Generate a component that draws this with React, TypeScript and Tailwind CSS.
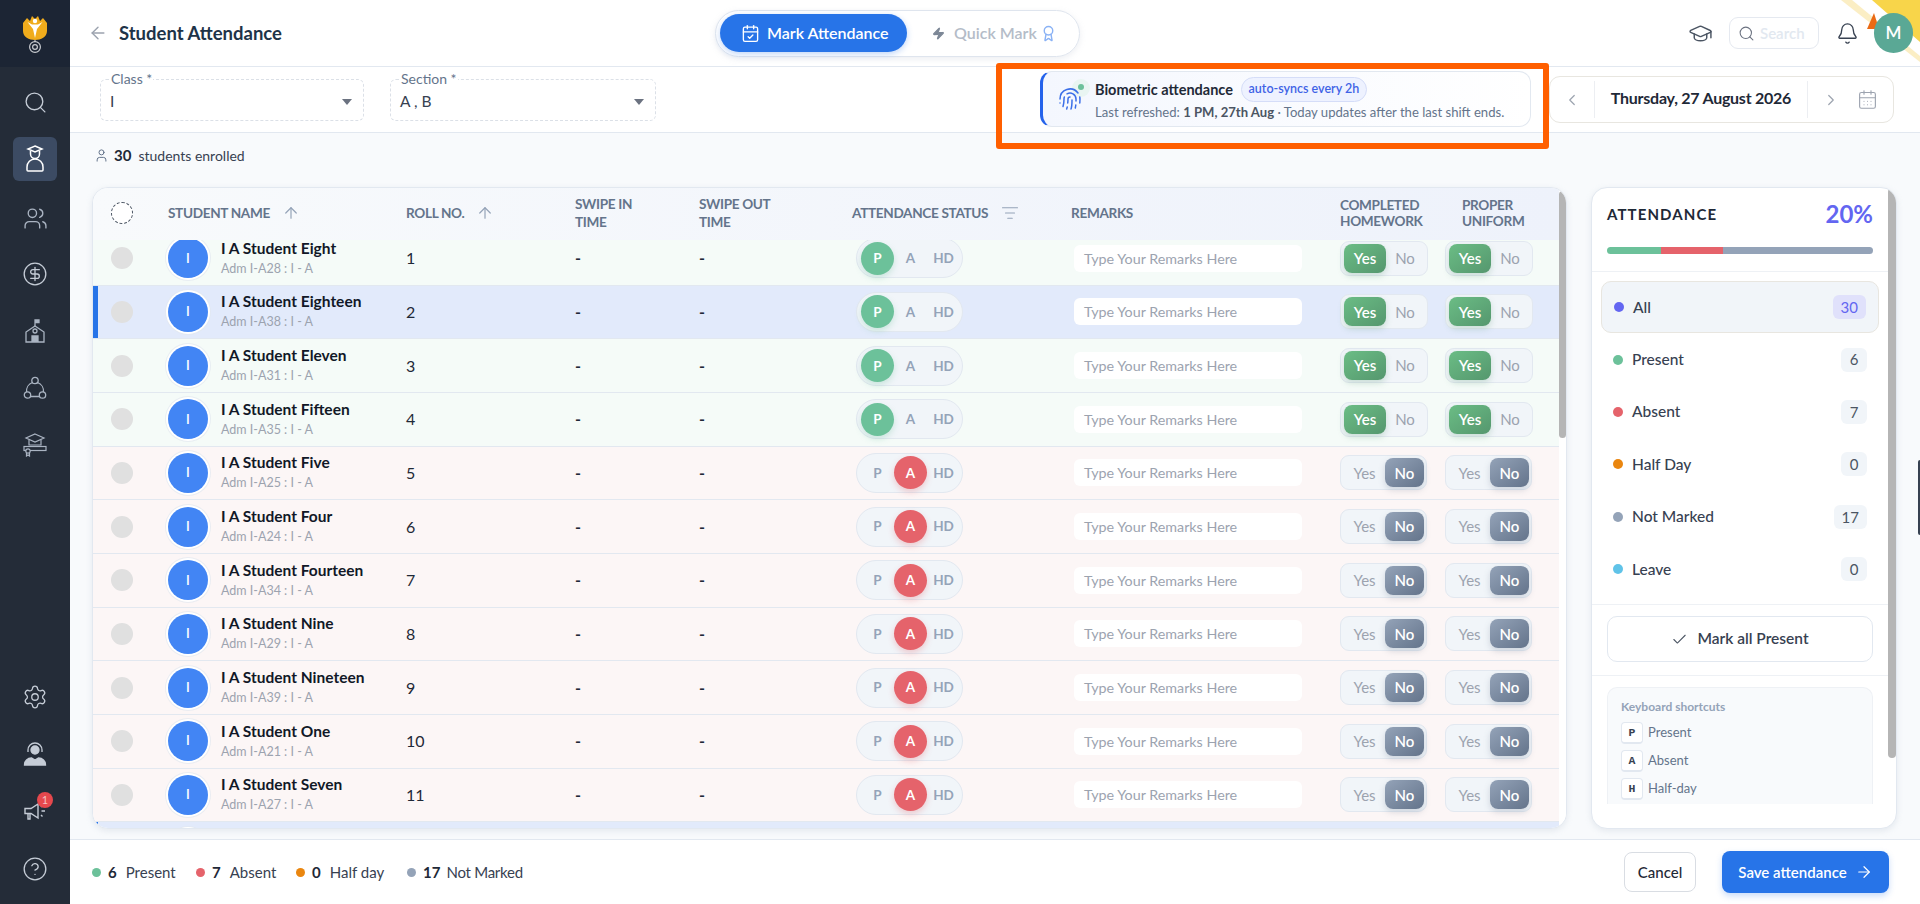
import React from "react";
import {
  ArrowLeft, ArrowRight, ArrowUp, Award, Bell, CalendarCheck, CalendarDays, Check, ChevronLeft, ChevronRight,
  CircleDollarSign, CircleHelp, Fingerprint, GraduationCap, ListFilter, Search, Settings, User, Users, Zap,
} from "lucide-react";

const FONT = "font-['Lato','Noto_Sans',sans-serif]";

function Logo() {
  return (
    <svg width="24" height="38" viewBox="0 0 24 38" fill="none">
      <path d="M0 8L4 3l3 3 2-5 3 3 3-3 2 5 3-3 4 5v8c0 6-6 9-12 9S0 22 0 16z" fill="#f0ac1c" />
      <path d="M4.500 7L9 9.500h6L19.500 7 14 14l-2 9-2-9z" fill="#fff" />
      <circle cx="12" cy="6" r="2.200" fill="#fff" />
      <path d="M12 25v2" stroke="#c9ccd1" strokeWidth="1.200" />
      <circle cx="12" cy="32" r="5.400" stroke="#c9ccd1" strokeWidth="1.200" />
      <circle cx="12" cy="32" r="2.400" stroke="#c9ccd1" strokeWidth="1.200" />
    </svg>
  );
}

function StudentIcon() {
  return (
    <svg width="22" height="28" viewBox="0 0 22 28" fill="none" stroke="#fff" strokeWidth="1.5">
      <path d="M11 1l7 3-7 3-7-3z" />
      <path d="M6.500 6v3a4.500 4.500 0 0 0 9 0V6" />
      <path d="M3 25v-3a8 8 0 0 1 16 0v3a1 1 0 0 1-1 1H4a1 1 0 0 1-1-1z" />
    </svg>
  );
}

function SchoolIcon() {
  return (
    <svg width="22" height="24" viewBox="0 0 22 24" fill="none" stroke="#aab4c2" strokeWidth="1.300">
      <path d="M11 8V1h4v2.500h-4" fill="#aab4c2" />
      <path d="M2 23V13l9-6 9 6v10z" />
      <circle cx="11" cy="12" r="2" />
      <path d="M8 23v-6h6v6" fill="#aab4c2" />
    </svg>
  );
}

function NetworkIcon() {
  return (
    <svg width="24" height="24" viewBox="0 0 24 24" fill="none" stroke="#aab4c2" strokeWidth="1.300">
      <circle cx="12" cy="4.500" r="3.200" />
      <circle cx="4.500" cy="19" r="3.200" />
      <circle cx="19.500" cy="19" r="3.200" />
      <path d="M9.500 6.500A9 9 0 0 0 3.600 16M14.500 6.500a9 9 0 0 1 5.900 9.500M7.500 20.500h9" />
    </svg>
  );
}

function GradIcon() {
  return (
    <svg width="24" height="24" viewBox="0 0 24 24" fill="none" stroke="#aab4c2" strokeWidth="1.200">
      <path d="M12 1l9 4-9 4-9-4z" />
      <path d="M6 7v5h12V7" />
      <rect x="1" y="13.500" width="22" height="4" />
      <circle cx="5" cy="18" r="2.200" fill="#242c38" />
      <path d="M3.500 20v3l1.500-1 1.500 1v-3" />
    </svg>
  );
}

function SupportIcon() {
  return (
    <svg width="24" height="24" viewBox="0 0 24 24" fill="none" stroke="#c5ccd6" strokeWidth="1.300">
      <circle cx="12" cy="8" r="4" fill="#c5ccd6" />
      <path d="M5 10V8a7 7 0 0 1 14 0v2" />
      <path d="M1.500 23c0-4 3-7 7-7l3.500 2 3.500-2c4 0 7 3 7 7z" fill="#c5ccd6" />
    </svg>
  );
}

function MegaphoneIcon() {
  return (
    <svg width="24" height="24" viewBox="0 0 24 24" fill="none" stroke="#c5ccd6" strokeWidth="1.400">
      <path d="M2 9.500h6L15 5v14l-7-4.500H2z" />
      <path d="M5 14.500V20h2v-5.500M18 8l1-1.500M18.500 12H22M18 16l1.500 1.500" />
    </svg>
  );
}

function Sidebar() {
  return (
    <aside className="w-[70px] h-full shrink-0 bg-[#242c38] flex flex-col items-center">
      <div className="w-full h-[67px] bg-[#1c2534] flex items-center justify-center shrink-0">
        <Logo />
      </div>
      <div className="mt-[23px] h-6 flex items-center justify-center"><Search size={25} strokeWidth={1.3} color="#c5ccd6" /></div>
      <div className="mt-[23px] w-11 h-11 rounded-md bg-[#3c4b63] flex items-center justify-center"><StudentIcon /></div>
      <div className="mt-[25px] h-6 flex items-center"><Users size={25} strokeWidth={1.3} color="#aab4c2" /></div>
      <div className="mt-[32px] h-6 flex items-center"><CircleDollarSign size={26} strokeWidth={1.2} color="#c5ccd6" /></div>
      <div className="mt-[33px] h-6 flex items-center"><SchoolIcon /></div>
      <div className="mt-[33px] h-6 flex items-center"><NetworkIcon /></div>
      <div className="mt-[33px] h-6 flex items-center"><GradIcon /></div>
      <div className="mt-[228px] h-6 flex items-center"><Settings size={26} strokeWidth={1.2} color="#c5ccd6" /></div>
      <div className="mt-[33px] h-6 flex items-center"><SupportIcon /></div>
      <div className="mt-[33px] h-6 flex items-center relative">
        <MegaphoneIcon />
        <span className={`absolute -top-[7px] left-[14px] w-4 h-4 rounded-full bg-[#e5484d] text-[11px] leading-4 text-center text-[#f5c2c4] ${FONT}`}>1</span>
      </div>
      <div className="mt-[34px] h-6 flex items-center"><CircleHelp size={26} strokeWidth={1.2} color="#c5ccd6" /></div>
    </aside>
  );
}

function Header() {
  return (
    <header className="relative h-[67px] shrink-0 bg-white border-b border-[#e2e8f0] flex items-center overflow-hidden">
      <div className="w-[645px] shrink-0 pl-[18px] flex items-center gap-[11px]">
        <ArrowLeft size={20} strokeWidth={1.7} color="#9ca3af" />
        <span className="text-[18.5px] font-bold text-[#1e3348] leading-none">Student Attendance</span>
      </div>
      <div className="w-[365px] h-[47px] rounded-full border border-[#dfe5ee] shadow-[0_2px_6px_rgba(148,163,184,0.18)] flex items-center p-1">
        <div className="w-[187px] h-[38px] rounded-full bg-[#2774e8] shadow-[0_2px_6px_rgba(39,116,232,0.3)] flex items-center pl-[21px] gap-[7px] text-white">
          <CalendarCheck size={19} strokeWidth={1.7} />
          <span className="text-[16px] font-semibold">Mark Attendance</span>
        </div>
        <div className="flex items-center pl-[25px] text-[#b4bcc8]">
          <Zap size={13} fill="#7c8796" color="#7c8796" />
          <span className="text-[16px] font-semibold ml-[9px]">Quick Mark</span>
          <Award size={17} color="#8ab2f5" strokeWidth={2} className="ml-[3px]" />
        </div>
      </div>
      <div className="flex-1 flex items-center">
        <GraduationCap size={25} strokeWidth={1.4} color="#4b5563" className="ml-[608px]" />
        <div className="ml-[16px] w-[90px] h-[32px] rounded-[9px] border border-[#e5e9f0] flex items-center pl-[8px] gap-[5px]">
          <Search size={17} strokeWidth={1.5} color="#6b7280" />
          <span className="text-[15px] font-semibold text-[#e2e8f0]">Search</span>
        </div>
        <Bell size={23} strokeWidth={1.4} color="#374151" className="ml-[17px]" />
      </div>
      <svg className="absolute right-0 top-0" width="80" height="66" viewBox="0 0 80 66">
        <path d="M1 0h11l68 56v6z" fill="#fbeec4" />
        <path d="M32 0h48v42z" fill="#f8d54a" />
        <path d="M27 29l7-16 5 16z" fill="#ea6a14" />
      </svg>
      <div className="absolute right-[7px] top-[13px] w-[39px] h-[40px] rounded-full bg-[#5aa895] text-white text-[17px] font-semibold flex items-center justify-center">M</div>
    </header>
  );
}

function Field({ label, value, className }: { label: string; value: string; className: string }) {
  return (
    <div className={`relative h-[42px] rounded-md border border-dashed border-[#dbe0e7] flex items-center pl-[9px] pr-[11px] justify-between ${className}`}>
      <span className="absolute -top-[10px] left-[9px] bg-white px-[1px] text-[14px] text-[#64748b] leading-[18px]">{label}</span>
      <span className="text-[15.5px] text-[#374151] mt-[3px]">{value}</span>
      <span className="w-0 h-0 border-x-[5px] border-x-transparent border-t-[6px] border-t-[#6b7280] mt-[3px]" />
    </div>
  );
}

function FilterBar() {
  return (
    <div className="h-[66px] shrink-0 bg-white border-b border-[#e2e8f0] flex items-start pl-[30px] pr-[26px]">
      <Field label="Class *" value="I" className="w-[264px] mt-[12px]" />
      <Field label="Section *" value="A , B" className="w-[266px] ml-[26px] mt-[12px]" />
      <div className="ml-[384px] mt-[4px] w-[491px] h-[56px] rounded-xl border border-[#e2e8f0] border-l-[3px] border-l-[#2563eb] bg-gradient-to-r from-[#f4f7fe] to-white flex items-center pl-[15px] gap-[13px]">
        <div className="relative w-[23px] h-[24px] shrink-0">
          <span className="absolute -top-[8px] left-[14px] w-[18px] h-[18px] rounded-full bg-[#e9f5f2]" />
          <Fingerprint size={24} strokeWidth={1.5} color="#3b6fe8" className="relative" />
          <span className="absolute -top-[3px] left-[20px] w-[6px] h-[6px] rounded-full bg-[#6cc19a]" />
        </div>
        <div className="flex flex-col ml-[1px]">
          <div className="flex items-center gap-2">
            <span className="text-[14.5px] font-bold text-[#1f2937]">Biometric attendance</span>
            <span className="h-[25px] w-[126px] rounded-full bg-[#eef2ff] border border-[#d5ddf8] text-[12.5px] font-semibold text-[#3f63e6] flex items-center justify-center">auto-syncs every 2h</span>
          </div>
          <div className="text-[13.1px] text-[#64748b] leading-[18px] mt-[1px]">
            Last refreshed: <b className="font-bold text-[#4b5563]">1 PM, 27th Aug</b> · Today updates after the last shift ends.
          </div>
        </div>
      </div>
      <div className="ml-[18px] mt-[9px] w-[345px] h-[47px] rounded-[11px] border border-[#e8e6e0] flex items-center">
        <div className="w-[45px] flex items-center justify-center border-r border-[#eceef2] h-[37px]"><ChevronLeft size={18} strokeWidth={1.6} color="#9ca3af" /></div>
        <div className="w-[213px] text-center text-[16px] tracking-[-0.25px] font-bold text-[#1f2937] border-r border-[#eceef2] h-[37px] leading-[34px]">Thursday, 27 August 2026</div>
        <div className="flex-1 flex items-center justify-between pl-[14px] pr-[15px]">
          <ChevronRight size={18} strokeWidth={1.6} color="#9ca3af" />
          <CalendarDays size={21} strokeWidth={1.3} color="#9ca3af" />
        </div>
      </div>
    </div>
  );
}

type S = { name: string; adm: string; status: "P" | "A" };
const students: S[] = [
  { name: "Eight", adm: "A28", status: "P" },
  { name: "Eighteen", adm: "A38", status: "P" },
  { name: "Eleven", adm: "A31", status: "P" },
  { name: "Fifteen", adm: "A35", status: "P" },
  { name: "Five", adm: "A25", status: "A" },
  { name: "Four", adm: "A24", status: "A" },
  { name: "Fourteen", adm: "A34", status: "A" },
  { name: "Nine", adm: "A29", status: "A" },
  { name: "Nineteen", adm: "A39", status: "A" },
  { name: "One", adm: "A21", status: "A" },
  { name: "Seven", adm: "A27", status: "A" },
  { name: "Seventeen", adm: "A37", status: "P" },
];

const GRID = "grid grid-cols-[75px_238px_169px_124px_157px_218px_266px_105px_114px] items-center";

function YesNo({ yes }: { yes: boolean }) {
  return (
    <div className={`h-[35px] rounded-[9px] border border-[#e2e8f0] bg-[#f1f5f9] flex items-center text-[15px] ${yes ? "w-[88px] pl-[3px]" : "w-[87px] pl-[3px]"}`}>
      {yes ? (
        <>
          <span className="w-[42px] h-[29px] rounded-[8px] bg-gradient-to-br from-[#6bbd85] to-[#55976e] text-white font-semibold flex items-center justify-center shadow-[0_3px_6px_rgba(85,151,110,0.25)]">Yes</span>
          <span className="flex-1 text-center text-[#9ca3af] pr-[3px]">No</span>
        </>
      ) : (
        <>
          <span className="flex-1 text-center text-[#9ca3af]">Yes</span>
          <span className="w-[39px] h-[29px] rounded-[8px] bg-gradient-to-br from-[#94a3b8] to-[#64748b] text-white font-semibold flex items-center justify-center mr-[2px] shadow-[0_3px_6px_rgba(100,116,139,0.25)]">No</span>
        </>
      )}
    </div>
  );
}

function StatusPill({ status }: { status: "P" | "A" }) {
  const cell = "w-[33px] text-center text-[13.5px] font-bold text-[#94a3b8]";
  return (
    <div className="w-[107px] h-[40px] rounded-full border border-[#e2e8f0] bg-[#f1f5f9] flex items-center pl-[4px]">
      {status === "P" ? (
        <span className="w-[33px] h-[33px] rounded-full bg-[#6cc19a] text-white text-[13.5px] font-bold flex items-center justify-center shadow-[0_3px_6px_rgba(108,193,154,0.3)]">P</span>
      ) : (
        <span className={cell}>P</span>
      )}
      {status === "A" ? (
        <span className="w-[33px] h-[33px] rounded-full bg-[#e5636b] text-white text-[13.5px] font-bold flex items-center justify-center shadow-[0_3px_6px_rgba(229,99,107,0.3)]">A</span>
      ) : (
        <span className={cell}>A</span>
      )}
      <span className={cell}>HD</span>
    </div>
  );
}

function Row({ s, i }: { s: S; i: number }) {
  const selected = i === 1 || i === 11;
  const bg = selected ? "bg-[#e2eafb]" : s.status === "P" ? "bg-[#f5fbf8]" : "bg-[#fcf6f6]";
  return (
    <div className={`${GRID} relative h-[53.67px] shrink-0 border-b border-[#e2e8f0] ${bg}`}>
      {selected && <span className="absolute left-0 top-0 bottom-0 w-[5px] bg-[#2774e8]" />}
      <div className="pl-[18px]"><div className="w-[22px] h-[22px] rounded-full bg-[#e0e0e0]" /></div>
      <div className="flex items-center">
        <div className="w-[40px] h-[40px] rounded-full bg-[#4285f4] ring-2 ring-white shadow-[0_0_0_3px_rgba(226,232,240,0.7)] text-white text-[13px] font-semibold flex items-center justify-center">I</div>
        <div className="ml-[13px] flex flex-col -mt-[2px]">
          <span className="text-[15.5px] font-bold text-[#111827] leading-[22px]">I A Student {s.name}</span>
          <span className="text-[12.5px] text-[#9ca3af] leading-[19px]">Adm I-{s.adm} : I - A</span>
        </div>
      </div>
      <div className="text-[16px] text-[#1f2937]">{i + 1}</div>
      <div className="text-[16px] font-bold text-[#1f2937]">-</div>
      <div className="text-[16px] font-bold text-[#1f2937]">-</div>
      <StatusPill status={s.status} />
      <div className="w-[228px] h-[27px] rounded-md bg-white flex items-center pl-[10px] text-[14.3px] text-[#9ca3af]">Type Your Remarks Here</div>
      <YesNo yes={s.status === "P"} />
      <YesNo yes={s.status === "P"} />
    </div>
  );
}

function Table() {
  const th = "text-[13.6px] font-bold text-[#64748b] tracking-tight";
  return (
    <div className="relative w-[1475px] h-[642px] shrink-0 rounded-2xl border border-[#e2e8f0] bg-white shadow-[0_2px_6px_rgba(148,163,184,0.2)] overflow-hidden flex">
      <div className="w-[1466px] h-full flex flex-col overflow-hidden">
        <div className={`${GRID} h-[52px] shrink-0 pb-[2px] bg-gradient-to-r from-[#f8fafc] to-[#eef2fb]`}>
          <div className="pl-[18px]"><div className="w-[22px] h-[22px] rounded-full border border-dashed border-[#4b5563] bg-white" /></div>
          <div className={`${th} flex items-center gap-[12px]`}>STUDENT NAME <ArrowUp size={18} strokeWidth={1.6} color="#94a3b8" /></div>
          <div className={`${th} flex items-center gap-[12px]`}>ROLL NO. <ArrowUp size={18} strokeWidth={1.6} color="#94a3b8" /></div>
          <div className={`${th} leading-[18px]`}>SWIPE IN<br />TIME</div>
          <div className={`${th} leading-[18px]`}>SWIPE OUT<br />TIME</div>
          <div className={`${th} -ml-[4px] flex items-center gap-[13px]`}>ATTENDANCE STATUS <ListFilter size={18} strokeWidth={1.5} color="#94a3b8" /></div>
          <div className={`${th} -ml-[3px]`}>REMARKS</div>
          <div className={`${th} leading-[16px]`}>COMPLETED<br />HOMEWORK</div>
          <div className={`${th} ml-[17px] leading-[16px]`}>PROPER<br />UNIFORM</div>
        </div>
        <div className="flex-1 overflow-hidden">
          <div className="-mt-[8px] flex flex-col">
            {students.map((s, i) => <Row key={s.name} s={s} i={i} />)}
          </div>
        </div>
      </div>
      <div className="flex-1 bg-white relative">
        <span className="absolute left-0 right-0 top-[3px] h-[247px] rounded-full bg-[#b5b5b5]" />
      </div>
    </div>
  );
}

const legend = [
  { label: "All", n: 30, dot: "bg-[#6366f1]" },
  { label: "Present", n: 6, dot: "bg-[#6cc19a]" },
  { label: "Absent", n: 7, dot: "bg-[#e5636b]" },
  { label: "Half Day", n: 0, dot: "bg-[#ea860f]" },
  { label: "Not Marked", n: 17, dot: "bg-[#94a3b8]" },
  { label: "Leave", n: 0, dot: "bg-[#60c3e8]" },
];

function Panel() {
  return (
    <div className="relative w-[306px] h-[642px] shrink-0 rounded-2xl border border-[#e2e8f0] bg-white shadow-[0_2px_6px_rgba(148,163,184,0.2)] overflow-hidden flex flex-col">
      <span className="absolute right-0 top-0 w-[8px] h-[570px] rounded-full bg-[#b5b5b5]" />
      <div className="px-[15px] pt-[8px] h-[84px] shrink-0 border-b border-[#eef1f5] mr-[8px]">
        <div className="flex items-center justify-between h-[36px]">
          <span className="text-[15px] font-bold tracking-[1.1px] text-[#1f2937]">ATTENDANCE</span>
          <span className="text-[24px] font-bold text-[#6366f1]">20%</span>
        </div>
        <div className="mt-[15px] h-[7px] rounded-full overflow-hidden flex">
          <span className="w-[54px] bg-[#6cc19a]" />
          <span className="w-[62px] bg-[#e5636b]" />
          <span className="flex-1 bg-[#94a3b8]" />
        </div>
      </div>
      <div className="mr-[8px] px-[9px] pt-[9px] border-b border-[#eef1f5] h-[333px] shrink-0">
        {legend.map((l, i) => (
          <div key={l.label} className={`h-[52.4px] flex items-center pl-[12px] pr-[12px] text-[15.5px] text-[#374151] ${i === 0 ? "bg-[#f1f5f9] rounded-[10px] border border-[#e8e6e0]" : ""}`}>
            <span className={`w-[10px] h-[10px] rounded-full ${l.dot}`} />
            <span className="ml-[9px] font-medium">{l.label}</span>
            <span className={`ml-auto h-[24px] min-w-[26px] px-[8px] rounded-[6px] flex items-center justify-center text-[15px] ${i === 0 ? "bg-[#e0e1fb] text-[#6366f1]" : "bg-[#f1f5f9] text-[#4b5563]"}`}>{l.n}</span>
          </div>
        ))}
      </div>
      <div className="mr-[8px] px-[15px] pt-[11px] pb-[13px] border-b border-[#eef1f5] shrink-0">
        <div className="h-[46px] rounded-[10px] border border-[#e2e8f0] flex items-center justify-center gap-[9px] text-[15.5px] font-semibold text-[#374151]">
          <Check size={17} strokeWidth={1.5} color="#4b5563" /> Mark all Present
        </div>
      </div>
      <div className="mx-[15px] mr-[23px] mt-[11px] h-[117px] rounded-t-[10px] border border-b-0 border-[#eef1f5] bg-[#f8fafc] pl-[13px] pt-[10px] overflow-hidden shrink-0">
        <div className="text-[12px] font-bold text-[#94a3b8] leading-[17px]">Keyboard shortcuts</div>
        <div className="mt-[7px] flex flex-col gap-[6px]">
          {[["P", "Present"], ["A", "Absent"], ["H", "Half-day"]].map(([k, l]) => (
            <div key={k} className="flex items-center gap-[5px]">
              <span className="w-[22px] h-[22px] rounded-[4px] border border-[#e2e8f0] border-b-2 bg-white text-[11.5px] font-bold font-['Liberation_Mono',monospace] text-[#374151] flex items-center justify-center">{k}</span>
              <span className="text-[13px] text-[#64748b]">{l}</span>
            </div>
          ))}
        </div>
      </div>
    </div>
  );
}

function Footer() {
  const items = [
    { n: 6, l: "Present", d: "bg-[#6cc19a]", w: "w-[104px]", t: "ml-[9px]" },
    { n: 7, l: "Absent", d: "bg-[#e5636b]", w: "w-[100px]", t: "ml-[9px]" },
    { n: 0, l: "Half day", d: "bg-[#ea860f]", w: "w-[111px]", t: "ml-[9px]" },
    { n: 17, l: "Not Marked", d: "bg-[#94a3b8]", w: "w-[150px]", t: "ml-[6px] tracking-[-0.25px]" },
  ];
  return (
    <footer className="h-[65px] shrink-0 bg-white border-t border-[#e2e8f0] flex items-center pl-[22px] pr-[31px]">
      {items.map((it) => (
        <div key={it.l} className={`${it.w} flex items-center text-[15px]`}>
          <span className={`w-[9px] h-[9px] rounded-full ${it.d}`} />
          <span className="ml-[7px] font-bold text-[#1f2937]">{it.n}</span>
          <span className={`${it.t} text-[#374151]`}>{it.l}</span>
        </div>
      ))}
      <div className="ml-auto w-[72px] h-[40px] rounded-[8px] border border-[#d9dde3] flex items-center justify-center text-[15px] text-[#1f2937] font-medium">Cancel</div>
      <div className="ml-[26px] w-[167px] h-[42px] rounded-[8px] bg-[#2774e8] shadow-[0_3px_6px_rgba(39,116,232,0.25)] flex items-center justify-center gap-[8px] text-white text-[15px] font-semibold">
        Save attendance <ArrowRight size={18} strokeWidth={1.6} />
      </div>
    </footer>
  );
}

export default function App() {
  return (
    <div className={`relative w-[1920px] h-[904px] overflow-hidden flex bg-[#f8fafc] ${FONT}`}>
      <Sidebar />
      <main className="flex-1 min-w-0 flex flex-col">
        <Header />
        <FilterBar />
        <div className="h-[54px] shrink-0 flex items-center pl-[24px] pb-[9px] text-[14px] text-[#374151]">
          <User size={15} strokeWidth={1.6} color="#64748b" />
          <span className="ml-[5px] font-bold text-[#1f2937] text-[15px]">30</span>
          <span className="ml-[7px]">students enrolled</span>
        </div>
        <div className="flex-1 min-h-0 flex items-start pl-[22px] gap-[24px]">
          <Table />
          <Panel />
        </div>
        <Footer />
      </main>
      <div className="absolute left-[996px] top-[63px] w-[553px] h-[86px] border-[6px] border-[#ff5f00] rounded-[3px]" />
      <span className="absolute right-0 top-[460px] w-[2px] h-[75px] rounded-l bg-[#374151]" />
    </div>
  );
}
